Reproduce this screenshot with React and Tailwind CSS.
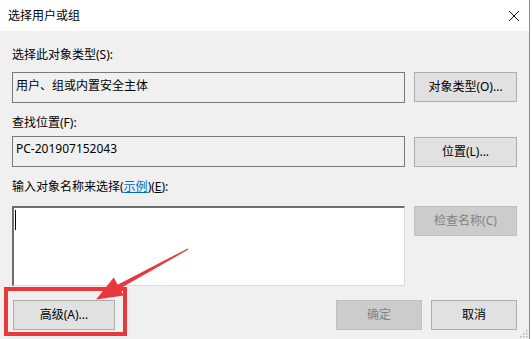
const font = { fontFamily: '"Noto Sans", "Noto Sans CJK SC", sans-serif' };

function Btn({ children, disabled, className = '' }) {
  return (
    <div
      className={`flex items-center justify-center border text-[12px] ${
        disabled
          ? 'bg-[#cccccc] border-[#bfbfbf] text-[#838383]'
          : 'bg-[#e1e1e1] border-[#adadad] text-black'
      } ${className}`}
    >
      {children}
    </div>
  );
}

export default function App() {
  return (
    <div className="w-[532px] h-[339px] bg-white overflow-hidden relative" style={font}>
      <div className="w-[530px] h-[339px] border-r border-[#8a8a8a] flex flex-col bg-[#f0f0f0]">
        {/* 标题栏 */}
        <div className="h-[31px] bg-white flex items-center justify-between pl-[8px] pr-[9px]">
          <span className="text-[12px] text-black leading-4">选择用户或组</span>
          <svg width="12" height="12" viewBox="0 0 12 12" className="mr-[0px]">
            <path d="M1 1 L11 11 M11 1 L1 11" stroke="#111" strokeWidth="1" />
          </svg>
        </div>

        <div className="flex flex-col pl-[12px] text-[12px] leading-4 text-black">
          <div className="mt-[16px]">选择此对象类型(S):</div>
          <div className="mt-[9px] flex items-start gap-[9px]">
            <div className="w-[393px] h-[31px] border border-[#7a7a7a] bg-[#f0f0f0] px-[3px] pt-[5px]">
              用户、组或内置安全主体
            </div>
            <Btn className="w-[103px] h-[30px]">对象类型(O)...</Btn>
          </div>

          <div className="mt-[12px]">查找位置(F):</div>
          <div className="mt-[5px] flex items-start gap-[9px]">
            <div className="w-[393px] h-[31px] border border-[#7a7a7a] bg-[#f0f0f0] px-[3px] pt-[4px]">
              PC-201907152043
            </div>
            <Btn className="w-[103px] h-[30px] mt-[1px]">位置(L)...</Btn>
          </div>

          <div className="mt-[12px]">
            输入对象名称来选择(
            <span className="text-[#0066cc] underline">示例</span>)(<span className="underline">E</span>):
          </div>
          <div className="mt-[11px] flex items-start gap-[9px]">
            <div className="w-[393px] h-[80px] bg-white border-t-2 border-l-2 border-t-[#6d6d6d] border-l-[#6d6d6d] border-r border-b border-r-[#dcdcdc] border-b-[#dcdcdc] pl-[1px] pt-[2px]">
              <div className="w-[1px] h-[20px] bg-black" />
            </div>
            <Btn disabled className="w-[103px] h-[30px]">检查名称(C)</Btn>
          </div>

          <div className="mt-[14px] flex items-center pr-[12px]">
            <Btn className="w-[102px] h-[30px] ml-[1px]">高级(A)...</Btn>
            <div className="flex-1" />
            <Btn disabled className="w-[86px] h-[30px]">确定</Btn>
            <Btn className="w-[86px] h-[30px] ml-[9px]">取消</Btn>
          </div>
        </div>
      </div>

      {/* 尺寸调整手柄 */}
      <svg className="absolute right-[4px] bottom-[1px]" width="10" height="10" viewBox="0 0 10 10">
        {[[8, 2], [5, 5], [8, 5], [2, 8], [5, 8], [8, 8]].map(([x, y]) => (
          <rect key={`${x}-${y}`} x={x} y={y} width="1.5" height="1.5" fill="#b5b5b5" />
        ))}
      </svg>

      {/* 标注：红框 + 箭头 */}
      <div className="absolute left-[4px] top-[287px] w-[123px] h-[49px] border-[4px] border-[#e8383d]" />
      <svg className="absolute left-0 top-0 pointer-events-none" width="532" height="339">
        <polygon
          points="188.3,249.6 187.7,248.4 117.6,284.8 113.8,277.6 96,299.5 123.8,295.6 120,288.4"
          fill="#e8383d"
        />
      </svg>
    </div>
  );
}
